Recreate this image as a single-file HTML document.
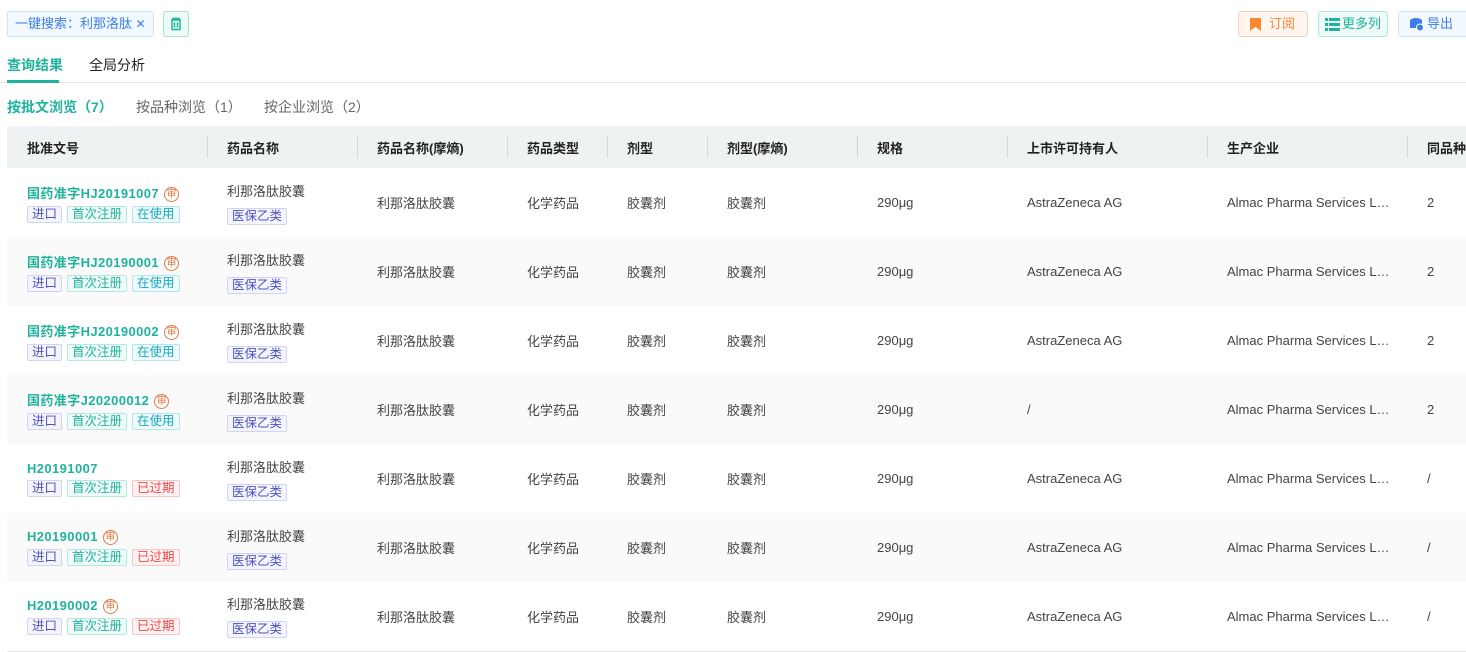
<!DOCTYPE html>
<html><head><meta charset="utf-8"><style>
*{box-sizing:border-box;margin:0;padding:0}
body{width:1466px;height:651px;overflow:hidden;background:#fff;font-family:"Liberation Sans","Noto Sans CJK SC",sans-serif;font-size:13px;color:#333;position:relative}
.abs{position:absolute}
.chip{left:7px;top:11px;height:26px;width:147px;border:1px solid #cfe2fb;background:#f2f8ff;border-radius:3px;color:#3b7ee8;font-size:13px;line-height:24px;padding-left:7px}
.trash{left:163px;top:11px;width:26px;height:26px;border:1px solid #a9e3d8;background:#eefaf7;border-radius:3px}
.btn{top:11px;height:26px;border-radius:3px;font-size:13px;line-height:24px;padding-left:30px}
.tabs{left:0;top:82px;width:1466px;height:1px;background:#e6e6e6}
table{position:absolute;left:7px;top:126px;border-collapse:collapse;table-layout:fixed;width:1480px}
th{height:42px;background:#eff2f3;text-align:left;font-weight:bold;color:#222;font-size:13px;padding-left:20px;position:relative}
th+th:before{content:"";position:absolute;left:0;top:9px;height:23px;width:1px;background:#d3d9da}
td{height:69px;padding-left:20px;font-size:13px;color:#444;white-space:nowrap;overflow:hidden}
tr.g td{background:#fafafa}
.no{color:#1fb39d;font-weight:bold;font-size:13px;letter-spacing:0.4px}
.sh{display:inline-block;width:15px;height:15px;border:1px solid #e07a45;border-radius:50%;color:#e07a45;font-size:10px;line-height:13px;text-align:center;vertical-align:1px;margin-left:5px;font-weight:normal;letter-spacing:0}
.tag{display:inline-block;height:17px;line-height:15px;font-size:12.5px;padding:0 4px;border:1px solid;border-radius:2px;margin-right:5px;margin-top:4px}
.t1{color:#4f53c0;border-color:#d2d3f0;background:#f4f4fd}
.t2{color:#1fb39d;border-color:#b5e9df;background:#effbf8}
.t3{color:#1aa8bb;border-color:#b4e6ee;background:#eefafc}
.t4{color:#f04848;border-color:#fbc4c4;background:#fff2f2}
.yb{color:#4f53c0;border-color:#d2d3f0;background:#f4f4fd;margin-top:8px}
tr:last-child td{border-bottom:1px solid #e6e6e6}
</style></head><body>
<div class="abs chip">一键搜索：利那洛肽 <span style="font-size:12px">✕</span></div>
<div class="abs trash"><svg width="24" height="24" viewBox="0 0 24 24"><g fill="none" stroke="#1fb39d" stroke-width="1.5"><path d="M7 8h10M9 8V6.5h6V8M8 8v9.5h8V8M10.5 10.5v5M13.5 10.5v5"/></g></svg></div>
<div class="abs btn" style="left:1238px;width:70px;border:1px solid #f6d2bb;background:#fff6f0;color:#f28532"><svg class="abs" style="left:11px;top:6px" width="11" height="13" viewBox="0 0 11 13"><path d="M0 0h11v13l-5.5-4L0 13z" fill="#f58a33"/></svg>订阅</div>
<div class="abs btn" style="left:1318px;width:70px;border:1px solid #b5e9df;background:#effbf8;color:#1fb39d;padding-left:23px"><svg class="abs" style="left:6px;top:6px" width="15" height="13" viewBox="0 0 15 13"><g fill="#1fb39d"><rect x="0" y="0" width="3" height="3"/><rect x="4" y="0" width="11" height="3"/><rect x="0" y="5" width="3" height="3"/><rect x="4" y="5" width="11" height="3"/><rect x="0" y="10" width="3" height="3"/><rect x="4" y="10" width="11" height="3"/></g></svg>更多列</div>
<div class="abs btn" style="left:1398px;width:70px;border:1px solid #cfe2fb;background:#f2f8ff;color:#3b7ee8;padding-left:28px"><svg class="abs" style="left:11px;top:6px" width="14" height="13" viewBox="0 0 14 13"><ellipse cx="6" cy="3" rx="6" ry="3" fill="#3b7ee8"/><rect x="0" y="3" width="12" height="7" fill="#3b7ee8"/><circle cx="10" cy="9.5" r="3.5" fill="#3b7ee8" stroke="#fff"/></svg>导出</div>
<div class="abs" style="left:7px;top:55px;font-size:14px;color:#1fb39d;font-weight:bold">查询结果</div>
<div class="abs" style="left:7px;top:80px;width:52px;height:3px;background:#1fb39d;z-index:2"></div>
<div class="abs" style="left:89px;top:55px;font-size:14px;color:#222">全局分析</div>
<div class="abs tabs"></div>
<div class="abs" style="left:7px;top:97px;font-size:14px;color:#1fb39d;font-weight:bold">按批文浏览（7）</div>
<div class="abs" style="left:136px;top:97px;font-size:14px;color:#666">按品种浏览（1）</div>
<div class="abs" style="left:264px;top:97px;font-size:14px;color:#666">按企业浏览（2）</div>
<div class="abs" style="left:7px;top:126px;width:1460px;height:42px;background:#eff2f3;border-radius:6px 0 0 6px"></div>
<table>
<colgroup><col style="width:200px"><col style="width:150px"><col style="width:150px"><col style="width:100px"><col style="width:100px"><col style="width:150px"><col style="width:150px"><col style="width:200px"><col style="width:200px"><col style="width:80px"></colgroup>
<tr><th>批准文号</th><th>药品名称</th><th>药品名称(摩熵)</th><th>药品类型</th><th>剂型</th><th>剂型(摩熵)</th><th>规格</th><th>上市许可持有人</th><th>生产企业</th><th>同品种</th></tr>
<tr><td><div class="no">国药准字HJ20191007<span class="sh">审</span></div><span class="tag t1">进口</span><span class="tag t2">首次注册</span><span class="tag t3">在使用</span></td><td>利那洛肽胶囊<br><span class="tag yb">医保乙类</span></td><td>利那洛肽胶囊</td><td>化学药品</td><td>胶囊剂</td><td>胶囊剂</td><td>290μg</td><td>AstraZeneca AG</td><td>Almac Pharma Services L…</td><td>2</td></tr>
<tr class="g"><td><div class="no">国药准字HJ20190001<span class="sh">审</span></div><span class="tag t1">进口</span><span class="tag t2">首次注册</span><span class="tag t3">在使用</span></td><td>利那洛肽胶囊<br><span class="tag yb">医保乙类</span></td><td>利那洛肽胶囊</td><td>化学药品</td><td>胶囊剂</td><td>胶囊剂</td><td>290μg</td><td>AstraZeneca AG</td><td>Almac Pharma Services L…</td><td>2</td></tr>
<tr><td><div class="no">国药准字HJ20190002<span class="sh">审</span></div><span class="tag t1">进口</span><span class="tag t2">首次注册</span><span class="tag t3">在使用</span></td><td>利那洛肽胶囊<br><span class="tag yb">医保乙类</span></td><td>利那洛肽胶囊</td><td>化学药品</td><td>胶囊剂</td><td>胶囊剂</td><td>290μg</td><td>AstraZeneca AG</td><td>Almac Pharma Services L…</td><td>2</td></tr>
<tr class="g"><td><div class="no">国药准字J20200012<span class="sh">审</span></div><span class="tag t1">进口</span><span class="tag t2">首次注册</span><span class="tag t3">在使用</span></td><td>利那洛肽胶囊<br><span class="tag yb">医保乙类</span></td><td>利那洛肽胶囊</td><td>化学药品</td><td>胶囊剂</td><td>胶囊剂</td><td>290μg</td><td>/</td><td>Almac Pharma Services L…</td><td>2</td></tr>
<tr><td><div class="no">H20191007</div><span class="tag t1">进口</span><span class="tag t2">首次注册</span><span class="tag t4">已过期</span></td><td>利那洛肽胶囊<br><span class="tag yb">医保乙类</span></td><td>利那洛肽胶囊</td><td>化学药品</td><td>胶囊剂</td><td>胶囊剂</td><td>290μg</td><td>AstraZeneca AG</td><td>Almac Pharma Services L…</td><td>/</td></tr>
<tr class="g"><td><div class="no">H20190001<span class="sh">审</span></div><span class="tag t1">进口</span><span class="tag t2">首次注册</span><span class="tag t4">已过期</span></td><td>利那洛肽胶囊<br><span class="tag yb">医保乙类</span></td><td>利那洛肽胶囊</td><td>化学药品</td><td>胶囊剂</td><td>胶囊剂</td><td>290μg</td><td>AstraZeneca AG</td><td>Almac Pharma Services L…</td><td>/</td></tr>
<tr><td><div class="no">H20190002<span class="sh">审</span></div><span class="tag t1">进口</span><span class="tag t2">首次注册</span><span class="tag t4">已过期</span></td><td>利那洛肽胶囊<br><span class="tag yb">医保乙类</span></td><td>利那洛肽胶囊</td><td>化学药品</td><td>胶囊剂</td><td>胶囊剂</td><td>290μg</td><td>AstraZeneca AG</td><td>Almac Pharma Services L…</td><td>/</td></tr>
</table>
</body></html>
